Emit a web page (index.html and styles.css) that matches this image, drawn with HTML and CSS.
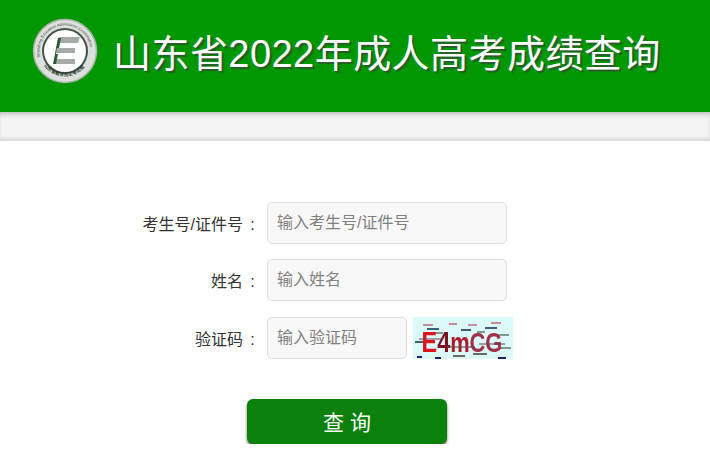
FILE: index.html
```html
<!DOCTYPE html>
<html lang="zh-CN">
<head>
    <meta charset="UTF-8">
    <title>山东省2022年成人高考成绩查询</title>
    <link rel="stylesheet" href="styles.css">
</head>
<body>

<div class="header">
    <svg class="logo" width="66" height="66" viewBox="0 0 66 66">
        <defs>
            <path id="ringTop" d="M9.5 43 A25.5 25.5 0 1 1 56.5 43"/>
            <path id="ringBottom" d="M11 46 A26 26 0 0 0 55 46"/>
        </defs>
        <circle cx="33" cy="33" r="31.5" fill="#dde1dd" stroke="#aab2aa" stroke-width="1.5"/>
        <circle cx="33" cy="33" r="23" fill="#44524a"/>
        <circle cx="33" cy="33" r="21" fill="#fff"/>
        <text class="ring-text"><textPath href="#ringTop" startOffset="4">Shandong Education Admissions Examination</textPath></text>
        <text class="ring-cn"><textPath href="#ringBottom" startOffset="2">山东省教育招生考试院</textPath></text>
        <path d="M27 19H48L46 25H26Z" fill="#a5aca5"/>
        <path d="M25 30H43V35H24Z" fill="#a5aca5"/>
        <path d="M23 41H43V46H22Z" fill="#a5aca5"/>
        <path d="M26 20H29L27 30H25L24 36H26L24 46H21L23 36L24 30Z" fill="#2f5a38"/>
    </svg>
    <h1 class="title">山东省2022年成人高考成绩查询</h1>
</div>
<div class="strip"></div>

<form class="query-form">
    <div class="form-group">
        <label for="ksh">考生号/证件号<span class="colon">:</span></label>
        <input type="text" id="ksh" placeholder="输入考生号/证件号">
    </div>
    <div class="form-group">
        <label for="xm">姓名<span class="colon">:</span></label>
        <input type="text" id="xm" placeholder="输入姓名">
    </div>
    <div class="form-group">
        <label for="yzm">验证码<span class="colon">:</span></label>
        <input type="text" id="yzm" class="code-input" placeholder="输入验证码">
        <svg class="captcha" width="100" height="42" viewBox="0 0 100 42">
            <rect width="100" height="42" fill="#dcf9f9"/>
            <g stroke-width="2" fill="none">
                <path d="M10 8H20M36 7H44M55 8H64M78 6H88" stroke="#c98a9a"/>
                <path d="M14 12H26M48 13H58M72 11H84M2 25H14" stroke="#3f5f7a"/>
                <path d="M18 16H30M64 15H72M82 18H96M86 31H98" stroke="#7c9a8a"/>
                <path d="M40 39H52M60 37H74" stroke="#6f6a60"/>
                <path d="M4 40H9M22 41H28M85 41H93" stroke="#20207a"/>
            </g>
            <text class="captcha-text" transform="scale(0.78 1)" x="11" y="35"><tspan class="cap-e">E</tspan><tspan class="cap-4">4</tspan><tspan class="cap-m">m</tspan><tspan class="cap-g">CG</tspan></text>
            <path d="M6 22H30M34 30H62M66 27H92" stroke="#6a3a4a" stroke-width="1" fill="none"/>
        </svg>
    </div>
    <button type="submit" class="submit-btn">查 询</button>
</form>

</body>
</html>
```

FILE: styles.css
```css
body {
    margin: 0;
    background-color: #fff;
    font-family: "Liberation Sans", "Noto Sans CJK SC", sans-serif;
    overflow: hidden;
}
.header {
    display: flex;
    align-items: center;
    box-sizing: border-box;
    height: 112px;
    padding: 0 0 10px 32px;
    background-color: #009700;
}
.logo {
    flex: none;
    margin-right: 15px;
}
.ring-text {
    font-size: 4px;
    fill: #3a463a;
}
.ring-cn {
    font-size: 4.6px;
    font-weight: bold;
    fill: #2a362a;
}
.title {
    margin: 0 0 2px;
    font-size: 38px;
    font-weight: normal;
    letter-spacing: 0.45px;
    color: #fff;
    text-shadow: 2px 2px 1px #2a5a2a;
    white-space: nowrap;
}
.strip {
    height: 27px;
    background-color: #f3f3f3;
    border-bottom: 2px solid #ddd;
    box-shadow: inset 0 4px 4px -2px #bbb, inset 0 -3px 3px -2px #ddd;
}
.query-form {
    display: flex;
    flex-direction: column;
    padding-top: 61px;
}
.form-group {
    display: flex;
    align-items: center;
    height: 42px;
    margin-bottom: 15.4px;
}
.form-group label {
    flex: none;
    width: 262px;
    margin-right: 5px;
    font-size: 16px;
    color: #333;
    text-align: right;
}
.colon {
    display: inline-block;
    width: 19px;
    text-align: center;
}
.form-group input {
    box-sizing: border-box;
    width: 240px;
    height: 42px;
    padding: 0 9px;
    font-family: inherit;
    font-size: 16px;
    background-color: #f8f8f8;
    border: 1px solid #ddd;
    border-radius: 5px;
}
.form-group input::placeholder {
    color: #808080;
    opacity: 1;
}
.form-group .code-input {
    width: 140px;
}
.captcha {
    margin-left: 6px;
    filter: blur(0.5px);
}
.captcha-text {
    font-family: "Liberation Sans", sans-serif;
    font-weight: bold;
}
.cap-e {
    font-size: 30px;
    fill: #e0141c;
}
.cap-4 {
    font-size: 30px;
    fill: #7a1020;
}
.cap-m {
    font-size: 28px;
    fill: #b0182c;
}
.cap-g {
    font-size: 28px;
    fill: #a03048;
}
.submit-btn {
    align-self: flex-start;
    width: 200px;
    height: 45px;
    margin: 24.8px 0 0 247px;
    font-family: inherit;
    font-size: 21px;
    color: #fff;
    background-color: #0b810b;
    border: none;
    border-radius: 6px;
    box-shadow: 0 2px 3px #666;
    cursor: pointer;
}
```
